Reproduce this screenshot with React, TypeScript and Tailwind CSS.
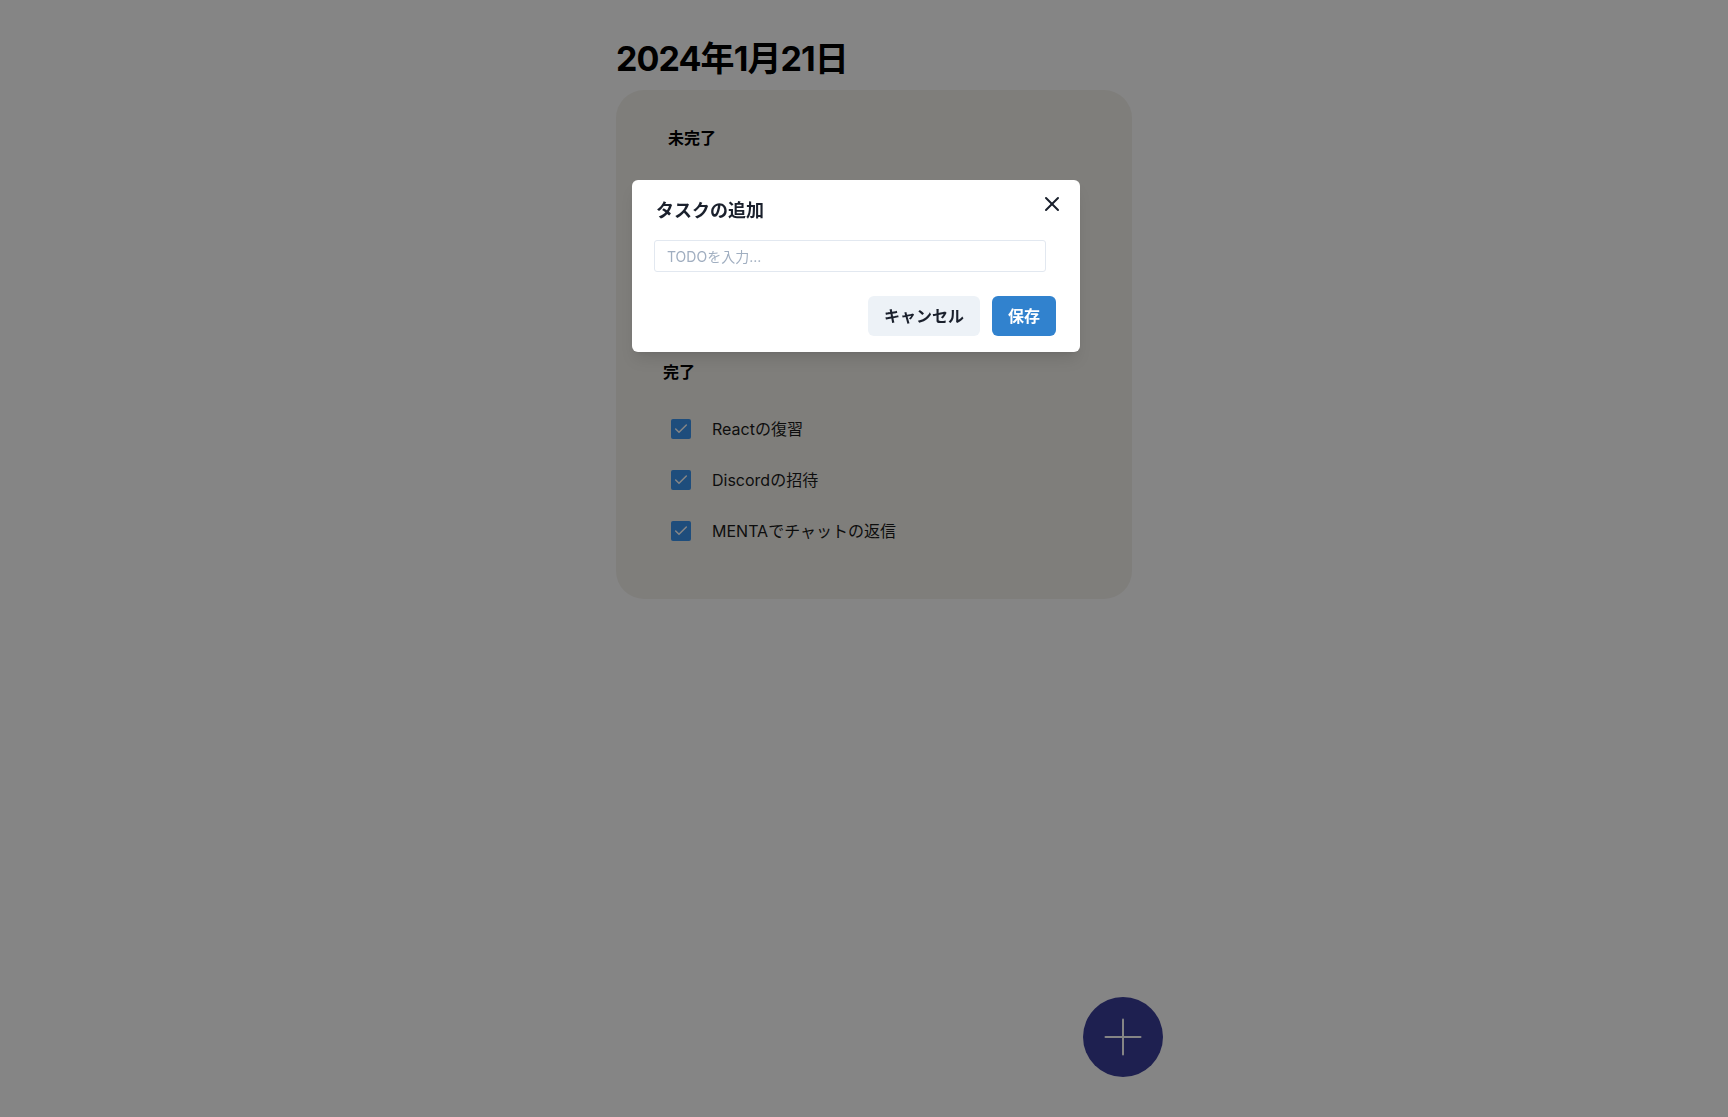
import { X, Plus, Check } from 'lucide-react';

const done = ['Reactの復習', 'Discordの招待', 'MENTAでチャットの返信'];

function TaskRow({ label }: { label: string }) {
  return (
    <li className="flex h-6 items-center">
      <span className="flex h-5 w-5 items-center justify-center rounded-[2px] bg-[#3a94ee]">
        <Check className="h-4 w-4 text-white" strokeWidth={2.25} />
      </span>
      <span className="ml-[21px] text-base leading-6 text-[#1a1a1a]">{label}</span>
    </li>
  );
}

export default function App() {
  return (
    <div
      className="relative min-h-screen bg-white"
      style={{ fontFamily: 'Inter, "Noto Sans CJK JP", sans-serif' }}
    >
      <div className="ml-[616px] w-[516px] pt-[37px]">
        <h1 className="text-[34px] font-bold leading-[43px] tracking-[-0.9px] text-black">
          2024年1月21日
        </h1>

        {/* Task card */}
        <div className="mt-[10px] h-[509px] rounded-[28px] bg-[#f4f2ec] pt-[36px]">
          {/* 未完了: list is hidden behind the dialog */}
          <section className="h-[183px]">
            <h2 className="pl-[52px] text-base font-bold leading-6 text-black">未完了</h2>
          </section>

          <section className="mt-[51px]">
            <h2 className="pl-[47px] text-base font-bold leading-6 text-black">完了</h2>
            <ul className="mt-[33px] flex flex-col gap-[27px] pl-[55px]">
              {done.map((t) => (
                <TaskRow key={t} label={t} />
              ))}
            </ul>
          </section>
        </div>
      </div>

      {/* Add button */}
      <button className="absolute left-[1083px] top-[997px] flex h-20 w-20 items-center justify-center rounded-full bg-[#3b3e99]">
        <Plus className="h-[60px] w-[60px] text-white" strokeWidth={0.8} />
      </button>

      {/* Overlay */}
      <div className="fixed inset-0 bg-black/[0.48]" />

      {/* Modal */}
      <div className="absolute left-[632px] top-[180px] w-[448px] rounded-md bg-white shadow-lg">
        <header className="px-6 pt-4 text-[18px] font-semibold leading-[30px] text-[#1a202c]">
          タスクの追加
        </header>
        <button className="absolute right-3 top-2 flex h-8 w-8 items-center justify-center rounded-md text-[#1a202c]">
          <X size={24} strokeWidth={2} />
        </button>
        <div className="px-[22px] pt-[14px]">
          <input
            className="h-8 w-[392px] rounded-[3px] border border-[#e2e8f0] px-3 text-sm text-[#1a202c] outline-none placeholder:text-[#a0aec0]"
            placeholder="TODOを入力..."
          />
        </div>
        <footer className="flex justify-end gap-3 px-6 pb-4 pt-6">
          <button className="h-10 w-[112px] rounded-md bg-[#edf2f7] text-base font-semibold text-[#1a202c]">
            キャンセル
          </button>
          <button className="h-10 w-16 rounded-md bg-[#3182ce] text-base font-semibold text-white">
            保存
          </button>
        </footer>
      </div>
    </div>
  );
}
